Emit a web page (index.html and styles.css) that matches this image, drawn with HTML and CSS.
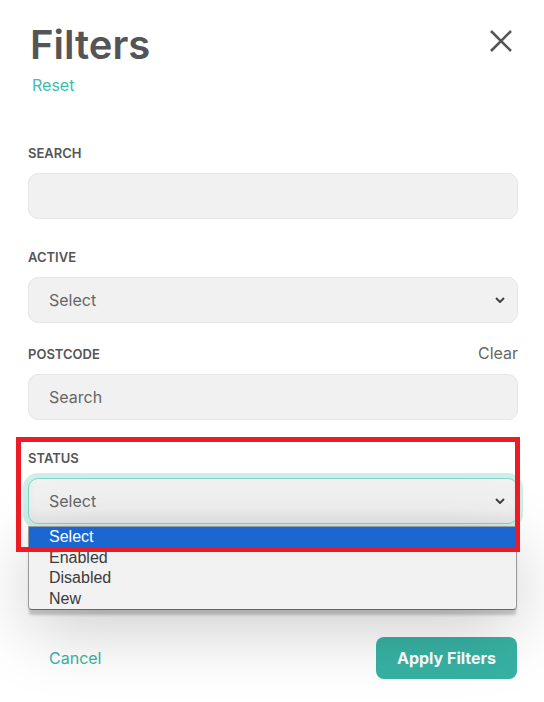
FILE: index.html
```html
<!DOCTYPE html>
<html lang="en">
<head>
    <meta charset="UTF-8">
    <meta name="viewport" content="width=device-width, initial-scale=1.0">
    <title>Filters</title>
    <link rel="stylesheet" href="styles.css">
</head>
<body>
    <div class="panel">
        <header class="panel-head">
            <div>
                <h1 class="panel-title">Filters</h1>
                <a class="link reset-link" href="#">Reset</a>
            </div>
            <button class="close-btn" type="button" aria-label="Close">
                <svg width="24" height="24" viewBox="0 0 24 24">
                    <path d="M2 2 L22 22 M22 2 L2 22" stroke="#555" stroke-width="2.6" fill="none"/>
                </svg>
            </button>
        </header>

        <form class="filters">
            <div class="field">
                <label class="field-label" for="search">Search</label>
                <input class="field-input" id="search" type="text">
            </div>

            <div class="field">
                <label class="field-label" for="active">Active</label>
                <div class="select-wrap">
                    <select class="field-input field-select" id="active">
                        <option>Select</option>
                    </select>
                    <svg class="chevron" width="10" height="6" viewBox="0 0 10 6">
                        <path d="M1 1 L5 5 L9 1" stroke="#444" stroke-width="2" fill="none"/>
                    </svg>
                </div>
            </div>

            <div class="field field-postcode">
                <div class="field-head">
                    <label class="field-label" for="postcode">Postcode</label>
                    <a class="clear-link" href="#">Clear</a>
                </div>
                <input class="field-input" id="postcode" type="text" placeholder="Search">
            </div>

            <div class="field field-status">
                <label class="field-label" for="status">Status</label>
                <div class="select-wrap">
                    <select class="field-input field-select is-open" id="status">
                        <option>Select</option>
                    </select>
                    <svg class="chevron" width="10" height="6" viewBox="0 0 10 6">
                        <path d="M1 1 L5 5 L9 1" stroke="#444" stroke-width="2" fill="none"/>
                    </svg>
                    <!-- open native list -->
                    <ul class="option-list">
                        <li class="option selected">Select</li>
                        <li class="option">Enabled</li>
                        <li class="option">Disabled</li>
                        <li class="option">New</li>
                    </ul>
                </div>
                <div class="highlight-box"></div>
            </div>
        </form>

        <footer class="panel-foot">
            <button class="btn btn-link" type="button">Cancel</button>
            <button class="btn btn-primary" type="button">Apply Filters</button>
        </footer>
    </div>
</body>
</html>
```

FILE: styles.css
```css
body {
    font-family: 'Inter', 'Noto Sans', sans-serif;
    margin: 0;
    padding: 0;
    background-color: #fff;
    color: #555;
}
.panel {
    padding: 22px 26px 23px 28px;
}
.panel-head {
    display: flex;
    justify-content: space-between;
    align-items: flex-start;
    margin-bottom: 50px;
}
.panel-title {
    margin: 0 0 0 2px;
    font-size: 40px;
    line-height: 46px;
    font-weight: 600;
    color: #555;
}
.link {
    color: #3dbdae;
    text-decoration: none;
}
.reset-link {
    display: block;
    margin: 7px 0 0 4px;
    font-size: 16px;
    line-height: 20px;
}
.close-btn {
    margin: 7px 5px 0 0;
    padding: 0;
    border: none;
    background: none;
    width: 24px;
    height: 24px;
    cursor: pointer;
}
.close-btn svg {
    display: block;
}
.field {
    position: relative;
    margin-bottom: 30px;
}
.field-postcode {
    margin-top: -8px;
}
.field-label {
    display: block;
    font-size: 13px;
    line-height: 16px;
    font-weight: 600;
    text-transform: uppercase;
    color: #555;
    margin-bottom: 12px;
}
.field-head {
    display: flex;
    justify-content: space-between;
    align-items: baseline;
    margin-bottom: 12px;
}
.field-head .field-label {
    margin-bottom: 0;
}
.clear-link {
    font-size: 16px;
    line-height: 16px;
    color: #666;
    text-decoration: none;
}
.field-input {
    display: block;
    box-sizing: border-box;
    width: 100%;
    height: 46px;
    padding: 0 20px;
    background: #f1f1f1;
    border: 1px solid #e6e6e6;
    border-radius: 10px;
    font-family: inherit;
    font-size: 16px;
    color: #666;
    outline: none;
}
.field-input::placeholder {
    color: #666;
}
.select-wrap {
    position: relative;
}
.field-select {
    appearance: none;
    -webkit-appearance: none;
}
.chevron {
    position: absolute;
    right: 13px;
    top: 20px;
}
.field-select.is-open {
    border-color: #86d3c9;
    box-shadow: 0 0 0 5px #cdeee9, inset 0 -8px 10px rgba(0, 0, 0, 0.04);
}
.option-list {
    position: absolute;
    top: 48px;
    left: 0;
    right: 1px;
    margin: 0;
    padding: 0;
    list-style: none;
    background: #f2f2f2;
    border: 1px solid #9a9a9a;
    border-bottom-color: #666;
    border-radius: 0 0 4px 4px;
    box-shadow: 0 6px 3px -1px rgba(0, 0, 0, 0.2), 0 20px 70px rgba(0, 0, 0, 0.2);
    z-index: 5;
    font-family: 'Liberation Sans', Arial, sans-serif;
    font-size: 16px;
    line-height: 20.5px;
    color: #3a3a3a;
}
.option {
    padding: 0 20px;
}
.option.selected {
    background: #1a67d2;
    color: #fff;
}
.highlight-box {
    position: absolute;
    top: -13px;
    left: -12px;
    width: 504px;
    height: 115px;
    box-sizing: border-box;
    border: 5px solid #ed1c24;
    z-index: 6;
    pointer-events: none;
}
.panel-foot {
    display: flex;
    justify-content: space-between;
    margin-top: 113px;
}
.btn {
    height: 42px;
    padding: 0 21px;
    border: none;
    border-radius: 8px;
    font-family: inherit;
    font-size: 16px;
    cursor: pointer;
}
.btn-link {
    background: none;
    color: #3ab4a6;
}
.btn-primary {
    margin-right: 1px;
    background: #37b2a4;
    color: #fff;
    font-weight: 700;
}
```
